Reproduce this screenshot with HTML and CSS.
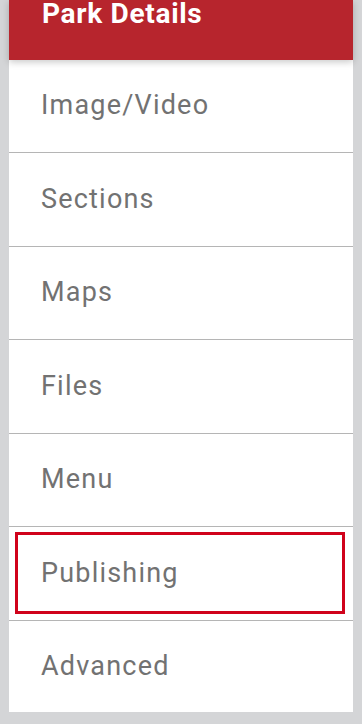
FILE: index.html
```html
<!DOCTYPE html>
<html>
<head>
<meta charset="utf-8">
<link rel="stylesheet" href="styles.css">
</head>
<body>
<div class="panel">
  <div class="panel-header">Park Details</div>
  <ul class="menu">
    <li class="menu-item">Image/Video</li>
    <li class="menu-item">Sections</li>
    <li class="menu-item">Maps</li>
    <li class="menu-item">Files</li>
    <li class="menu-item">Menu</li>
    <li class="menu-item menu-item--highlight">Publishing</li>
    <li class="menu-item menu-item--last">Advanced</li>
  </ul>
</div>
</body>
</html>
```
FILE: styles.css
```css
html, body {
  margin: 0;
  padding: 0;
}
body {
  background: #d4d5d7;
  font-family: Roboto, "Liberation Sans", sans-serif;
  width: 362px;
  height: 724px;
  overflow: hidden;
}
.panel {
  margin: 0 9px;
  background: #ffffff;
  height: 712px;
  display: flex;
  flex-direction: column;
}
.panel-header {
  position: relative;
  z-index: 1;
  height: 60px;
  box-sizing: border-box;
  background: #b7252d;
  color: #ffffff;
  font-weight: 700;
  font-size: 28px;
  line-height: 28px;
  letter-spacing: 0.7px;
  padding-left: 33px;
  box-shadow: 0 2px 7px rgba(0, 0, 0, 0.22);
}
.menu {
  list-style: none;
  margin: 0;
  padding: 0;
  display: flex;
  flex-direction: column;
}
.menu-item {
  position: relative;
  height: 93.5px;
  box-sizing: border-box;
  border-bottom: 1px solid #b5b5b5;
  display: flex;
  align-items: center;
  padding-left: 32px;
  padding-bottom: 1px;
  font-size: 27px;
  letter-spacing: 1.2px;
  color: #727272;
}
.menu-item--last {
  border-bottom: none;
  height: 91.5px;
}
.menu-item--highlight::after {
  content: "";
  position: absolute;
  top: 4.5px;
  left: 6px;
  right: 8px;
  bottom: 6px;
  border: 3px solid #d0021b;
}
```
